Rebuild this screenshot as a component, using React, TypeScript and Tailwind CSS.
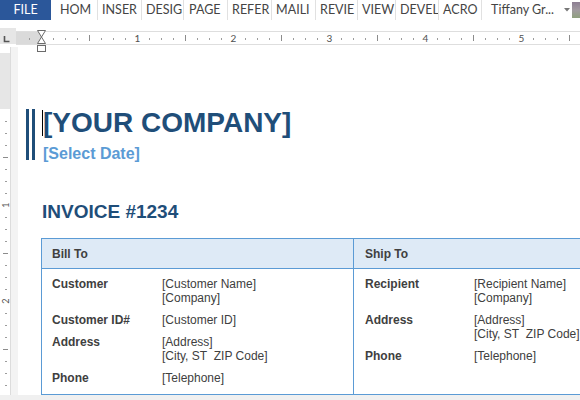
const tabs = [
  { label: "HOM", box: "w-[47px] pl-[9px]" },
  { label: "INSER", box: "w-[44px] pl-[4px]" },
  { label: "DESIG", box: "w-[42px] pl-[4px]" },
  { label: "PAGE", box: "w-[44px] pl-[5px]" },
  { label: "REFER", box: "w-[44px] pl-[4px]" },
  { label: "MAILI", box: "w-[44px] pl-[4px]" },
  { label: "REVIE", box: "w-[42px] pl-[4px]" },
  { label: "VIEW", box: "w-[38px] pl-[4px]" },
  { label: "DEVEL", box: "w-[43px] pl-[4px]" },
  { label: "ACRO", box: "w-[43px] pl-[4px]" },
];

const billRows = [
  { label: "Customer", lines: ["[Customer Name]", "[Company]"] },
  { label: "Customer ID#", lines: ["[Customer ID]"] },
  { label: "Address", lines: ["[Address]", "[City, ST\u00a0\u00a0ZIP Code]"] },
  { label: "Phone", lines: ["[Telephone]"] },
];

const shipRows = [
  { label: "Recipient", lines: ["[Recipient Name]", "[Company]"] },
  { label: "Address", lines: ["[Address]", "[City, ST\u00a0\u00a0ZIP Code]"] },
  { label: "Phone", lines: ["[Telephone]"] },
];

const uiFont = "'Segoe UI', Lato, 'Open Sans', sans-serif";

function HRuler() {
  const marks = [];
  for (let k = -1; k <= 45; k++) {
    const x = 41 + k * 12;
    if (k === 0) continue;
    if (k % 8 === 0) {
      marks.push(
        <text key={k} x={x + 0.5} y={14.7} fontSize={10} textAnchor="middle" fill="#505050" fontFamily={uiFont}>
          {k / 8}
        </text>
      );
    } else if (k % 4 === 0) {
      marks.push(<rect key={k} x={x} y={8} width={1} height={6} fill="#8c8c8c" />);
    } else {
      marks.push(<rect key={k} x={x} y={11} width={1} height={2} fill="#9c9c9c" />);
    }
  }
  return (
    <svg width="580" height="20" className="block">
      <rect x="0" y="1" width="16" height="16" fill="#e6e6e6" />
      <path d="M4.5 9 V14.5 H9.5" stroke="#555" strokeWidth="1.6" fill="none" />
      <rect x="16" y="4" width="25" height="14" fill="#dadada" />
      <rect x="41" y="4" width="539" height="14" fill="#ffffff" />
      <rect x="16" y="4" width="564" height="1" fill="#dedede" />
      <rect x="16" y="17" width="564" height="1" fill="#dedede" />
      {marks}
    </svg>
  );
}

function VRuler() {
  const marks = [];
  for (let k = 1; k <= 23; k++) {
    const y = 62 + k * 12;
    if (k % 8 === 0) {
      marks.push(
        <text
          key={k}
          x={5.5}
          y={y + 3}
          fontSize={9}
          textAnchor="middle"
          fill="#505050"
          fontFamily={uiFont}
          transform={`rotate(-90 5.5 ${y})`}
        >
          {k / 8}
        </text>
      );
    } else if (k % 4 === 0) {
      marks.push(<rect key={k} x={3} y={y} width={5} height={1} fill="#8c8c8c" />);
    } else {
      marks.push(<rect key={k} x={5} y={y} width={2} height={1} fill="#9c9c9c" />);
    }
  }
  return (
    <svg width="11" height="348" className="block shrink-0">
      <rect x="0" y="6" width="10" height="56" fill="#e6e6e6" />
      <rect x="10" y="0" width="1" height="348" fill="#dcdcdc" />
      {marks}
    </svg>
  );
}

function InfoRows({ rows, labelW }: { rows: { label: string; lines: string[] }[]; labelW: string }) {
  return (
    <div className="flex flex-col gap-[8px]">
      {rows.map((r) => (
        <div key={r.label} className="flex text-[12px] leading-[14px] text-[#404040]">
          <div className={`${labelW} shrink-0 font-bold`}>{r.label}</div>
          <div>
            {r.lines.map((l) => (
              <div key={l} className="whitespace-nowrap">{l}</div>
            ))}
          </div>
        </div>
      ))}
    </div>
  );
}

export default function App() {
  return (
    <div className="relative flex h-[400px] w-[580px] flex-col overflow-hidden bg-white" style={{ fontFamily: "'Liberation Sans', Arial, sans-serif" }}>
      {/* ribbon tabs */}
      <div className="flex h-[22px] items-start text-[12.5px] text-[#444]" style={{ fontFamily: uiFont }}>
        <div className="flex h-[20px] w-[52px] items-center justify-center bg-[#2b579a] text-white">FILE</div>
        {tabs.map((t) => (
          <div key={t.label} className={`${t.box} flex h-[20px] shrink-0 items-center overflow-hidden whitespace-nowrap border-r border-[#e1e1e1]`}>
            {t.label}
          </div>
        ))}
        <div className="flex h-[20px] flex-1 items-center pl-[9px] whitespace-nowrap">
          <span>Tiffany Gr...</span>
          <svg width="6" height="4" className="ml-[10px]">
            <path d="M0 0 H6 L3 3.5 Z" fill="#777" />
          </svg>
          <div className="ml-[2px] h-[16px] w-[8px] shrink-0 bg-gradient-to-b from-[#8d7f93] via-[#a19aa0] to-[#8fa07e]" />
        </div>
      </div>
      <div className="h-[5px]" />
      <HRuler />

      {/* document area */}
      <div className="flex h-[348px]">
        <VRuler />
        <div className="w-[7px] shrink-0 bg-[#f3f3f3]" />
        <div className="flex flex-1 flex-col overflow-hidden bg-white">
          <div className="mt-[60px] flex pl-[8px]">
            <div className="mt-[2px] flex gap-[3px]">
              <div className="h-[51px] w-[3px] bg-[#1f4e79]" />
              <div className="h-[51px] w-[3px] bg-[#1f4e79]" />
            </div>
            <div className="ml-[7px] flex flex-col">
              <div className="flex">
                <div className="mt-[3px] h-[26px] w-px bg-black" />
                <span className="whitespace-nowrap text-[28px] font-bold leading-[32px] text-[#1f4e79]">[YOUR COMPANY]</span>
              </div>
              <div className="mt-[6px] pl-px text-[16px] font-bold leading-[18px] text-[#5b9bd5]">[Select Date]</div>
            </div>
          </div>

          <div className="ml-[24px] mt-[38px] text-[19px] font-bold leading-[22px] text-[#1f4e79]">INVOICE #1234</div>

          <div className="ml-[23px] mt-[15px] flex w-[640px] shrink-0 border-b border-l border-t border-[#5b9bd5]">
            <div className="w-[312px] shrink-0 border-r border-[#5b9bd5]">
              <div className="flex h-[30px] items-center border-b border-[#5b9bd5] bg-[#deeaf6] pl-[10px] text-[12px] font-bold text-[#404040]">Bill To</div>
              <div className="h-[125px] pl-[10px] pt-[8px]">
                <InfoRows rows={billRows} labelW="w-[110px]" />
              </div>
            </div>
            <div className="flex-1">
              <div className="flex h-[30px] items-center border-b border-[#5b9bd5] bg-[#deeaf6] pl-[11px] text-[12px] font-bold text-[#404040]">Ship To</div>
              <div className="h-[125px] pl-[11px] pt-[8px]">
                <InfoRows rows={shipRows} labelW="w-[109px]" />
              </div>
            </div>
          </div>
        </div>
      </div>
      <div className="h-[5px] bg-[#f0f0f0]" />

      {/* indent marker */}
      <svg width="9" height="24" className="absolute left-[37px] top-[29px]">
        <path d="M0.5 1.5 H8.5 L4.5 8 Z" fill="#fff" stroke="#6b6b6b" />
        <path d="M4.5 8 L8.5 14.5 H0.5 Z" fill="#fff" stroke="#6b6b6b" />
        <rect x="0.5" y="16.5" width="8" height="6" fill="#fff" stroke="#6b6b6b" />
      </svg>
    </div>
  );
}
